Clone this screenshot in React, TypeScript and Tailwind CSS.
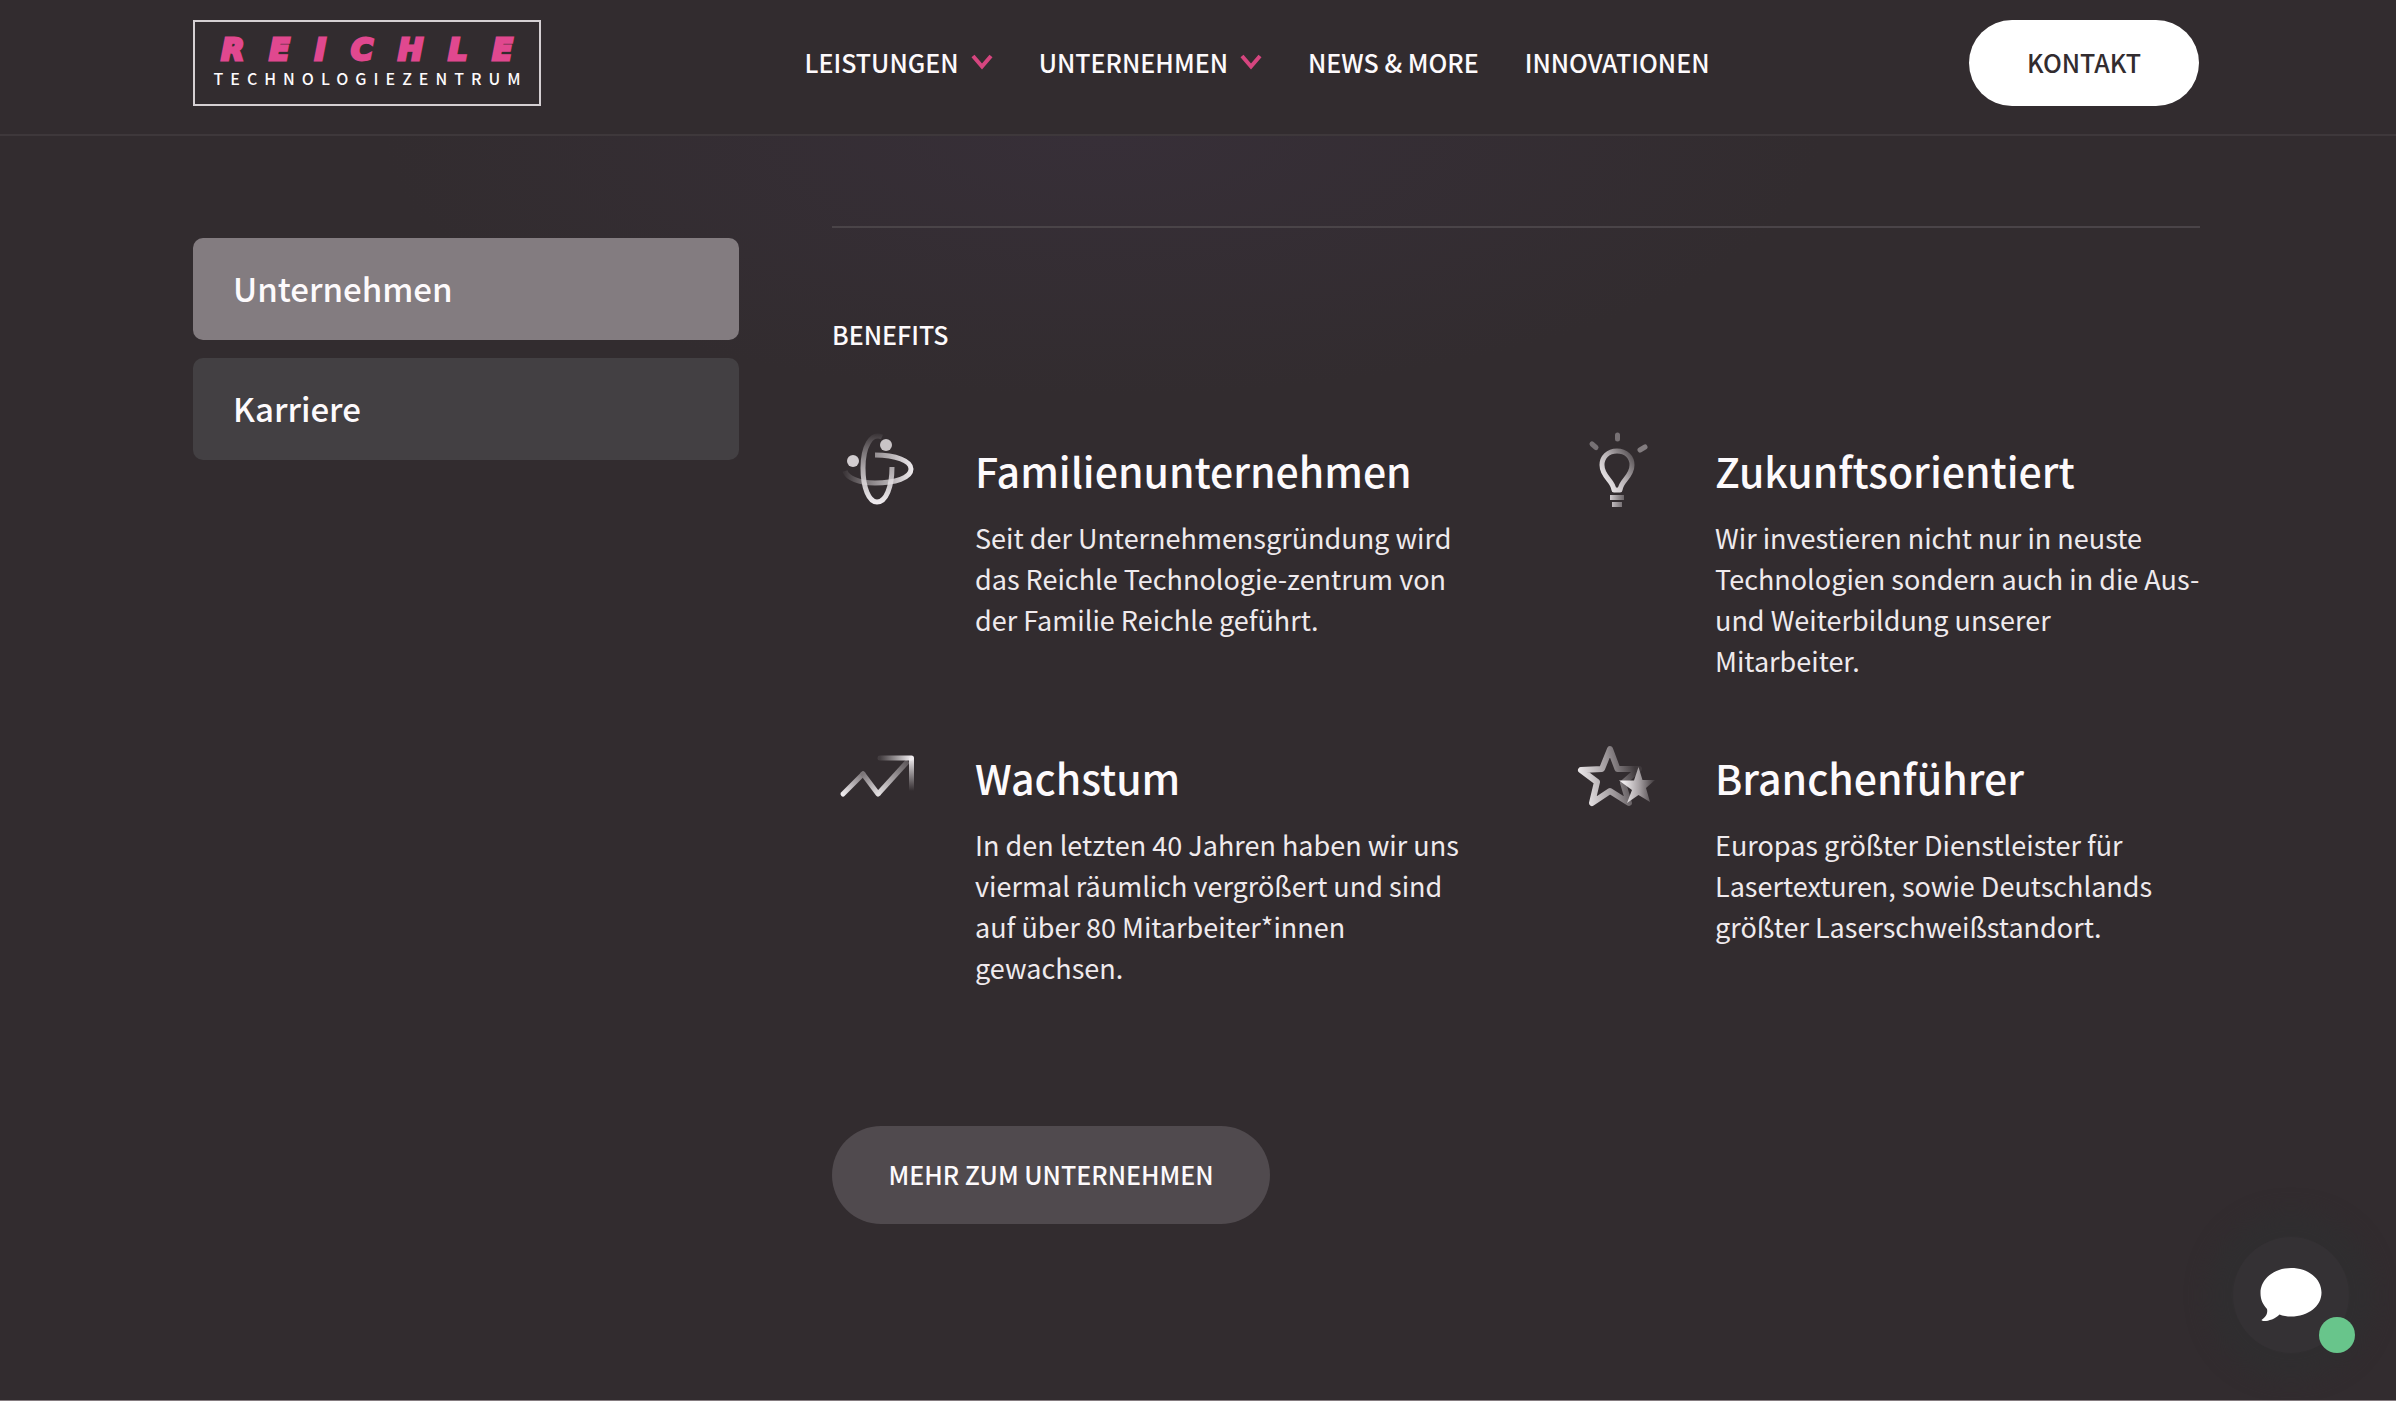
import type { ReactNode } from "react";

function Chevron() {
  return (
    <svg viewBox="0 0 22 16" className="h-4 w-[22px]" fill="none" stroke="#d6457f" strokeWidth="4" aria-hidden="true">
      <path d="M2 2 11 12.500 20 2" />
    </svg>
  );
}

function FamilyIcon() {
  return (
    <svg viewBox="0 0 120 100" className="h-[100px] w-[120px]" fill="none" strokeWidth="5" aria-hidden="true">
      <defs>
        <linearGradient id="fam-h" gradientUnits="userSpaceOnUse" x1="24" y1="0" x2="94" y2="0">
          <stop offset="0" stopColor="#e9e4e7" stopOpacity="0.05" />
          <stop offset="0.5" stopColor="#d8d3d6" stopOpacity="0.65" />
          <stop offset="1" stopColor="#f1edf0" />
        </linearGradient>
        <linearGradient id="fam-v" gradientUnits="userSpaceOnUse" x1="0" y1="14" x2="0" y2="84">
          <stop offset="0" stopColor="#e9e4e7" stopOpacity="0.05" />
          <stop offset="0.5" stopColor="#d8d3d6" stopOpacity="0.75" />
          <stop offset="1" stopColor="#f1edf0" />
        </linearGradient>
      </defs>
      <path d="M55 35C76 35 91 41 91 49c0 9-16 14-36 14-16 0-28-5-30-12" stroke="url(#fam-h)" />
      <path d="M62 17C51 12 43 27 43 48c0 20 6 34 14 34 9 0 15-15 15-35" stroke="url(#fam-v)" />
      <circle cx="66" cy="25" r="6" fill="#c9c4c7" />
      <circle cx="33" cy="41" r="6" fill="#d2cdd0" />
    </svg>
  );
}

function BulbIcon() {
  return (
    <svg viewBox="0 0 120 100" className="h-[100px] w-[120px]" fill="none" strokeLinecap="round" aria-hidden="true">
      <defs>
        <linearGradient id="bulb" gradientUnits="userSpaceOnUse" x1="42" y1="60" x2="74" y2="38">
          <stop offset="0" stopColor="#ece8ea" />
          <stop offset="0.5" stopColor="#b5afb2" />
          <stop offset="1" stopColor="#5c5659" />
        </linearGradient>
        <linearGradient id="bulb-base" gradientUnits="userSpaceOnUse" x1="48" y1="0" x2="66" y2="0">
          <stop offset="0" stopColor="#dcd7da" />
          <stop offset="1" stopColor="#5c5659" />
        </linearGradient>
      </defs>
      <path d="M54 70C53 60 42 57 42 45c0-8 6-14 15-14s15 6 15 14c0 12-11 15-12 25z" stroke="url(#bulb)" strokeWidth="5" strokeLinejoin="round" />
      <path d="M51 76h12v3H51zM53 83h8v3h-8z" fill="url(#bulb-base)" stroke="url(#bulb-base)" strokeWidth="2" />
      <path d="M57.500 15v4" stroke="#777174" strokeWidth="5" />
      <path d="m32 24 4 3.500" stroke="#777174" strokeWidth="5" />
      <path d="m80 30 5-3" stroke="#827c7f" strokeWidth="5" />
    </svg>
  );
}

function GrowthIcon() {
  return (
    <svg viewBox="0 -3 120 100" className="h-[100px] w-[120px]" fill="none" strokeWidth="5" strokeLinejoin="round" aria-hidden="true">
      <defs>
        <linearGradient id="g-a" gradientUnits="userSpaceOnUse" x1="22" y1="64" x2="43" y2="44">
          <stop offset="0" stopColor="#f1edf0" />
          <stop offset="1" stopColor="#7c7679" />
        </linearGradient>
        <linearGradient id="g-b" gradientUnits="userSpaceOnUse" x1="43" y1="44" x2="58" y2="64">
          <stop offset="0" stopColor="#7c7679" />
          <stop offset="1" stopColor="#e2dee0" />
        </linearGradient>
        <linearGradient id="g-c" gradientUnits="userSpaceOnUse" x1="58" y1="64" x2="88" y2="32">
          <stop offset="0" stopColor="#e2dee0" />
          <stop offset="1" stopColor="#5c5659" />
        </linearGradient>
        <linearGradient id="g-d" gradientUnits="userSpaceOnUse" x1="60" y1="0" x2="91" y2="0">
          <stop offset="0" stopColor="#e2dee0" stopOpacity="0.1" />
          <stop offset="1" stopColor="#f1edf0" />
        </linearGradient>
        <linearGradient id="g-e" gradientUnits="userSpaceOnUse" x1="0" y1="28" x2="0" y2="61">
          <stop offset="0" stopColor="#f1edf0" />
          <stop offset="1" stopColor="#e2dee0" stopOpacity="0" />
        </linearGradient>
      </defs>
      <path d="M58 64 88 31" stroke="url(#g-c)" />
      <path d="M23 64 43 44" stroke="url(#g-a)" strokeLinecap="round" />
      <path d="M43 44 58 64" stroke="url(#g-b)" strokeLinecap="round" />
      <path d="M91.500 28v33" stroke="url(#g-e)" />
      <path d="M60 28l31.500 .1" stroke="url(#g-d)" strokeLinecap="round" />
    </svg>
  );
}

function StarsIcon() {
  return (
    <svg viewBox="0 -3 120 100" className="h-[100px] w-[120px]" strokeLinejoin="round" aria-hidden="true">
      <defs>
        <linearGradient id="star-l" gradientUnits="userSpaceOnUse" x1="20" y1="55" x2="76" y2="42">
          <stop offset="0" stopColor="#efebed" />
          <stop offset="0.550" stopColor="#9d979a" />
          <stop offset="1" stopColor="#3f393c" />
        </linearGradient>
        <linearGradient id="star-s" gradientUnits="userSpaceOnUse" x1="64" y1="58" x2="94" y2="58">
          <stop offset="0" stopColor="#efebed" />
          <stop offset="0.500" stopColor="#a7a1a4" />
          <stop offset="1" stopColor="#443e41" />
        </linearGradient>
      </defs>
      <path d="m50 19 7.500 20H79L63 53l6 20-19-12-18 12 5-21-16-12 21-1z" fill="none" stroke="url(#star-l)" strokeWidth="6" />
      <path d="m78.500 37 4 13H95l-9 8 4 14-11.500-7L67 73l5-13-13-9.500h15z" fill="url(#star-s)" />
    </svg>
  );
}

function NavLink({ children, menu }: { children: ReactNode; menu?: boolean }) {
  return (
    <a href="#" className="flex items-center gap-3 whitespace-nowrap">
      {children}
      {menu && <Chevron />}
    </a>
  );
}

function Benefit({ icon, title, children }: { icon: ReactNode; title: string; children: ReactNode }) {
  return (
    <article className="flex">
      <div className="-ml-3 w-[155px] shrink-0">{icon}</div>
      <div className="min-w-0 flex-1 pt-5">
        <h3 className="text-[41px] leading-[60px] font-medium">{title}</h3>
        <p className="mt-[17px] text-[27px] leading-[41px] text-[#efeaed]">{children}</p>
      </div>
    </article>
  );
}

export default function App() {
  return (
    <div className="flex min-h-screen flex-col border-b border-[#857c80] bg-[#322c2f] font-['Noto_Sans_CJK_SC',sans-serif] text-[#fdfafc]">
      <header className="flex items-start justify-between border-b-2 border-[#3e383b] pt-5 pr-[197px] pb-7 pl-[193px]">
        <a href="#" className="flex h-[86px] w-[348px] flex-col items-center justify-center gap-1 border-2 border-[#d5d0d3] pb-0.5">
          <span className="-mr-[25px] font-['DejaVu_Sans',sans-serif] text-[30px] leading-7 font-bold tracking-[25px] text-[#e0488f] italic [-webkit-text-stroke:3px_#e0488f]">REICHLE</span>
          <span className="-mr-[7px] text-[16px] leading-5 font-medium tracking-[7px]">TECHNOLOGIEZENTRUM</span>
        </a>
        <nav className="flex h-[84px] items-center gap-[46px] pl-1 text-[25px] leading-10 font-medium">
          <NavLink menu>LEISTUNGEN</NavLink>
          <NavLink menu>UNTERNEHMEN</NavLink>
          <NavLink>NEWS &amp; MORE</NavLink>
          <NavLink>INNOVATIONEN</NavLink>
        </nav>
        <button className="h-[86px] w-[230px] rounded-full bg-white text-[25px] font-medium text-[#322c2f]">KONTAKT</button>
      </header>

      <main className="flex flex-1 gap-[93px] bg-[radial-gradient(ellipse_720px_260px_at_46%_0,#372f38,#322c2f)] pr-[196px] pl-[193px]">
        <aside className="flex w-[546px] shrink-0 flex-col gap-[18px] pt-[102px]">
          <button className="h-[102px] rounded-[10px] bg-[#837c80] px-10 text-left text-[33px] font-medium">Unternehmen</button>
          <button className="h-[102px] rounded-[10px] bg-[#434043] px-10 text-left text-[33px] font-medium">Karriere</button>
        </aside>

        <section className="min-w-0 flex-1 pt-[90px]">
          <div className="border-t-2 border-[#4a4448] pt-[86px]">
            <h2 className="text-[25px] leading-10 font-medium">BENEFITS</h2>
          </div>
          <div className="mt-[66px] grid grid-cols-2 gap-x-28 gap-y-[46px]">
            <Benefit icon={<FamilyIcon />} title="Familienunternehmen">
              Seit der Unternehmensgründung wird das Reichle Technologie-zentrum von der Familie Reichle geführt.
            </Benefit>
            <Benefit icon={<BulbIcon />} title="Zukunftsorientiert">
              Wir investieren nicht nur in neuste Technologien sondern auch in die Aus- und Weiterbildung unserer Mitarbeiter.
            </Benefit>
            <Benefit icon={<GrowthIcon />} title="Wachstum">
              In den letzten 40 Jahren haben wir uns viermal räumlich vergrößert und sind auf über 80 Mitarbeiter*innen gewachsen.
            </Benefit>
            <Benefit icon={<StarsIcon />} title="Branchenführer">
              Europas größter Dienstleister für Lasertexturen, sowie Deutschlands größter Laserschweißstandort.
            </Benefit>
          </div>
          <button className="mt-[138px] h-[98px] w-[438px] rounded-full bg-[#504a4e] text-[25px] font-medium">MEHR ZUM UNTERNEHMEN</button>
        </section>
      </main>

      <button
        aria-label="Chat öffnen"
        className="fixed right-[47px] bottom-12 flex size-[116px] items-center justify-center rounded-full bg-[#343134] shadow-[0_0_20px_26px_#302e30]"
      >
        <svg viewBox="0 0 62 56" className="h-14 w-[62px]" fill="#fff" aria-hidden="true">
          <path d="M31 1C14 1 .5 12 .5 26c0 7 2.500 11.500 6.500 16 1 4-1 8-5.500 11 1 2.500 12.500.5 18-5.500 3.500 1.500 7.500 2 11.500 2 17 0 30.500-10 30.500-24S48 1 31 1z" />
        </svg>
        <span className="absolute right-[-6px] bottom-0 size-9 rounded-full bg-[#68c58b]" />
      </button>
    </div>
  );
}
